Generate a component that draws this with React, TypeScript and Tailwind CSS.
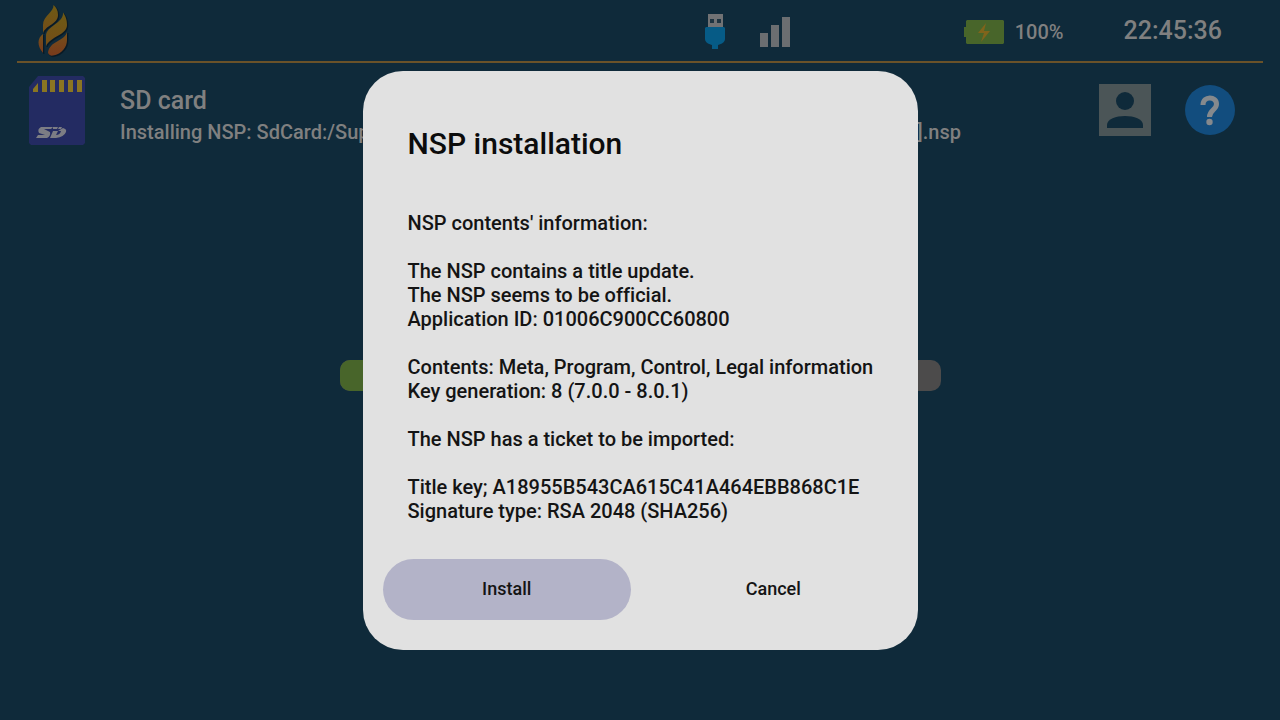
import React from "react";

const details: string[] = [
  "NSP contents' information:",
  "",
  "The NSP contains a title update.",
  "The NSP seems to be official.",
  "Application ID: 01006C900CC60800",
  "",
  "Contents: Meta, Program, Control, Legal information",
  "Key generation: 8 (7.0.0 - 8.0.1)",
  "",
  "The NSP has a ticket to be imported:",
  "",
  "Title key; A18955B543CA615C41A464EBB868C1E",
  "Signature type: RSA 2048 (SHA256)",
];

function FlameLogo() {
  return (
    <svg className="h-[54px] w-8" viewBox="0 0 32 54" aria-hidden="true">
      <defs>
        <linearGradient id="flame" x1="0" y1="0" x2="0" y2="1">
          <stop offset="0" stopColor="#6d5a14" />
          <stop offset="1" stopColor="#744d18" />
        </linearGradient>
        <linearGradient id="flameLow" x1="0" y1="0" x2="0" y2="1">
          <stop offset="0" stopColor="#74501a" />
          <stop offset="1" stopColor="#783a1c" />
        </linearGradient>
        <g id="flameShadow">
          <path d="M16.500 1C17 8 6 12 6 21V29C9 21 21 20 21 11C21 6 19 3 16.500 1Z" />
          <path d="M26 8.500C27 19 9 22 9 32V42C14 32 30 31 30 21C30 15 28 11 26 8.500Z" />
          <path d="M30 28C28 37 12 37 11 49C12 51 14 52 16 51.500C25 50 30 43 30 36Z" />
          <path d="M6 30C0 34 0 42 6 49Z" />
        </g>
      </defs>
      <use href="#flameShadow" x="1" y="1" fill="#091a25" stroke="#091a25" strokeWidth="0.6" />
      <path d="M16.500 1C17 8 6 12 6 21V29C9 21 21 20 21 11C21 6 19 3 16.500 1Z" fill="url(#flame)" />
      <path d="M26 8.500C27 19 9 22 9 32V42C14 32 30 31 30 21C30 15 28 11 26 8.500Z" fill="url(#flame)" />
      <path d="M30 28C28 37 12 37 11 49C12 51 14 52 16 51.500C25 50 30 43 30 36Z" fill="url(#flameLow)" />
      <path d="M6 30C0 34 0 42 6 49Z" fill="url(#flameLow)" />
    </svg>
  );
}

function UsbIcon() {
  return (
    <svg className="h-9 w-5" viewBox="0 0 20 36" role="img" aria-label="USB connected">
      <path d="M3 0H18V13H3Z" fill="#717274" />
      <path d="M5 5H9V9H5ZM12 5H16V9H12Z" fill="#1f3441" />
      <path d="M1 13H19L20 14V25C20 28 17 30 13 31V35H7V31C3 30 0 28 0 25V14Z" fill="#065b86" />
    </svg>
  );
}

function SignalIcon() {
  return (
    <svg className="h-[30px] w-[30px]" viewBox="0 0 30 30" role="img" aria-label="Signal strength">
      <path d="M0 16H8V30H0ZM11 8H19V30H11ZM22 0H30V30H22Z" fill="#6b6e71" />
    </svg>
  );
}

function BatteryIcon() {
  return (
    <svg className="h-6 w-10" viewBox="0 0 40 24" role="img" aria-label="Battery charging">
      <path d="M3 0H39L40 1V23L39 24H3L2 23V17H0V7H2V1Z" fill="#48652a" />
      <path d="M22 3L14 13H20L17 22L26 11H20Z" fill="#80641b" />
    </svg>
  );
}

function SdCardIcon() {
  return (
    <svg className="h-[70px] w-[58px]" viewBox="0 0 58 70" aria-hidden="true">
      <path d="M10 0H55L57 2V67L55 69H3L1 67V11Z" fill="#232b62" />
      <path d="M5 16V13L10 7V16ZM14 4H19V16H14ZM22 4H27V16H22ZM31 4H36V16H31ZM40 4H45V16H40ZM49 4H54V16H49Z" fill="#8a7522" />
      <path d="M13 51H25L23 53H16L22 56Q23 60 19 62H8L10 59H17L11 57Q9 53 13 51Z" fill="#7c7d84" />
      <path d="M25 51H30L29 53H25ZM31 51H34L33 53H30ZM35 52Q39 53 38 56Q36 61 28 62H22L25 55H30L28 59Q32 59 33 55H30Z" fill="#7c7d84" />
    </svg>
  );
}

function UserIcon() {
  return (
    <svg className="h-[52px] w-[52px]" viewBox="0 0 52 52" aria-hidden="true">
      <path d="M0 0H52V52H0Z" fill="#4b5557" />
      <circle cx="26" cy="17" r="9" fill="#0f2a3a" />
      <path d="M8 44V41C8 35 17 32 26 32S44 35 44 41V44Z" fill="#0f2a3a" />
    </svg>
  );
}

function HelpIcon() {
  return (
    <svg className="size-[50px]" viewBox="0 0 50 50" aria-hidden="true">
      <circle cx="25" cy="25" r="25" fill="#124d7e" />
      <path d="M18 20C18 10.500 31.500 11 31.500 19C31.500 25 24.500 25 24.500 32" fill="none" stroke="#85898d" strokeWidth="5" />
      <circle cx="24.500" cy="37" r="3.200" fill="#85898d" />
    </svg>
  );
}

export default function App() {
  return (
    <div className="flex min-h-screen flex-col bg-[#0f2a3a] font-['Roboto',sans-serif] font-medium text-[#808080] [font-variant-ligatures:none]">
      <header className="mx-[17px] flex h-[63px] items-center border-b-2 border-[#6a5229] pr-[41px] pl-5">
        <FlameLogo />
        <div className="ml-auto flex items-center">
          <div className="flex items-center pt-0.5">
            <UsbIcon />
            <div className="ml-[35px]">
              <SignalIcon />
            </div>
            <div className="ml-[174px] flex items-center gap-[11px]">
              <BatteryIcon />
              <span className="text-xl leading-6">100%</span>
            </div>
          </div>
          <time className="ml-[60px] text-[25px] leading-7">22:45:36</time>
        </div>
      </header>

      <section className="flex items-start pt-[13px] pr-[45px] pl-7">
        <SdCardIcon />
        <div className="ml-[34px] w-[841px] pt-2 whitespace-nowrap">
          <h1 className="text-[25px] leading-[34px]">SD card</h1>
          <p className="flex justify-between text-xl leading-7">
            <span>Installing NSP: SdCard:/Sup</span>
            <span>].nsp</span>
          </p>
        </div>
        <div className="ml-auto flex items-center gap-[34px] pt-2">
          <button type="button" aria-label="Users">
            <UserIcon />
          </button>
          <button type="button" aria-label="Help">
            <HelpIcon />
          </button>
        </div>
      </section>

      <main className="flex grow flex-col items-center pt-[214px]">
        <div
          role="progressbar"
          aria-label="Installation progress"
          aria-valuenow={50}
          className="flex h-[31px] w-[601px] overflow-hidden rounded-[10px] bg-[#4c4b4b]"
        >
          <div className="w-1/2 bg-[#48652a]" />
        </div>
      </main>

      <div className="fixed inset-0 flex items-center justify-center">
        <div
          role="dialog"
          aria-modal="true"
          aria-labelledby="dialog-title"
          className="w-[555px] rounded-[40px] bg-[#e1e1e1] px-5 pt-[55px] pb-[30px]"
        >
          <h2 id="dialog-title" className="px-[25px] text-[30px] leading-9 text-[#0c0c0c]">
            NSP installation
          </h2>
          <div className="mt-[49px] px-[25px] text-xl leading-6 whitespace-nowrap text-[#141414]">
            {details.map((line, i) => (
              <p key={i} className="h-6">
                {line}
              </p>
            ))}
          </div>
          <div className="mt-9 grid grid-cols-2 gap-[18px] text-lg text-[#141414]">
            <button type="button" className="h-[61px] rounded-full bg-[#b3b3c8]">
              Install
            </button>
            <button type="button" className="h-[61px] rounded-full">
              Cancel
            </button>
          </div>
        </div>
      </div>
    </div>
  );
}
